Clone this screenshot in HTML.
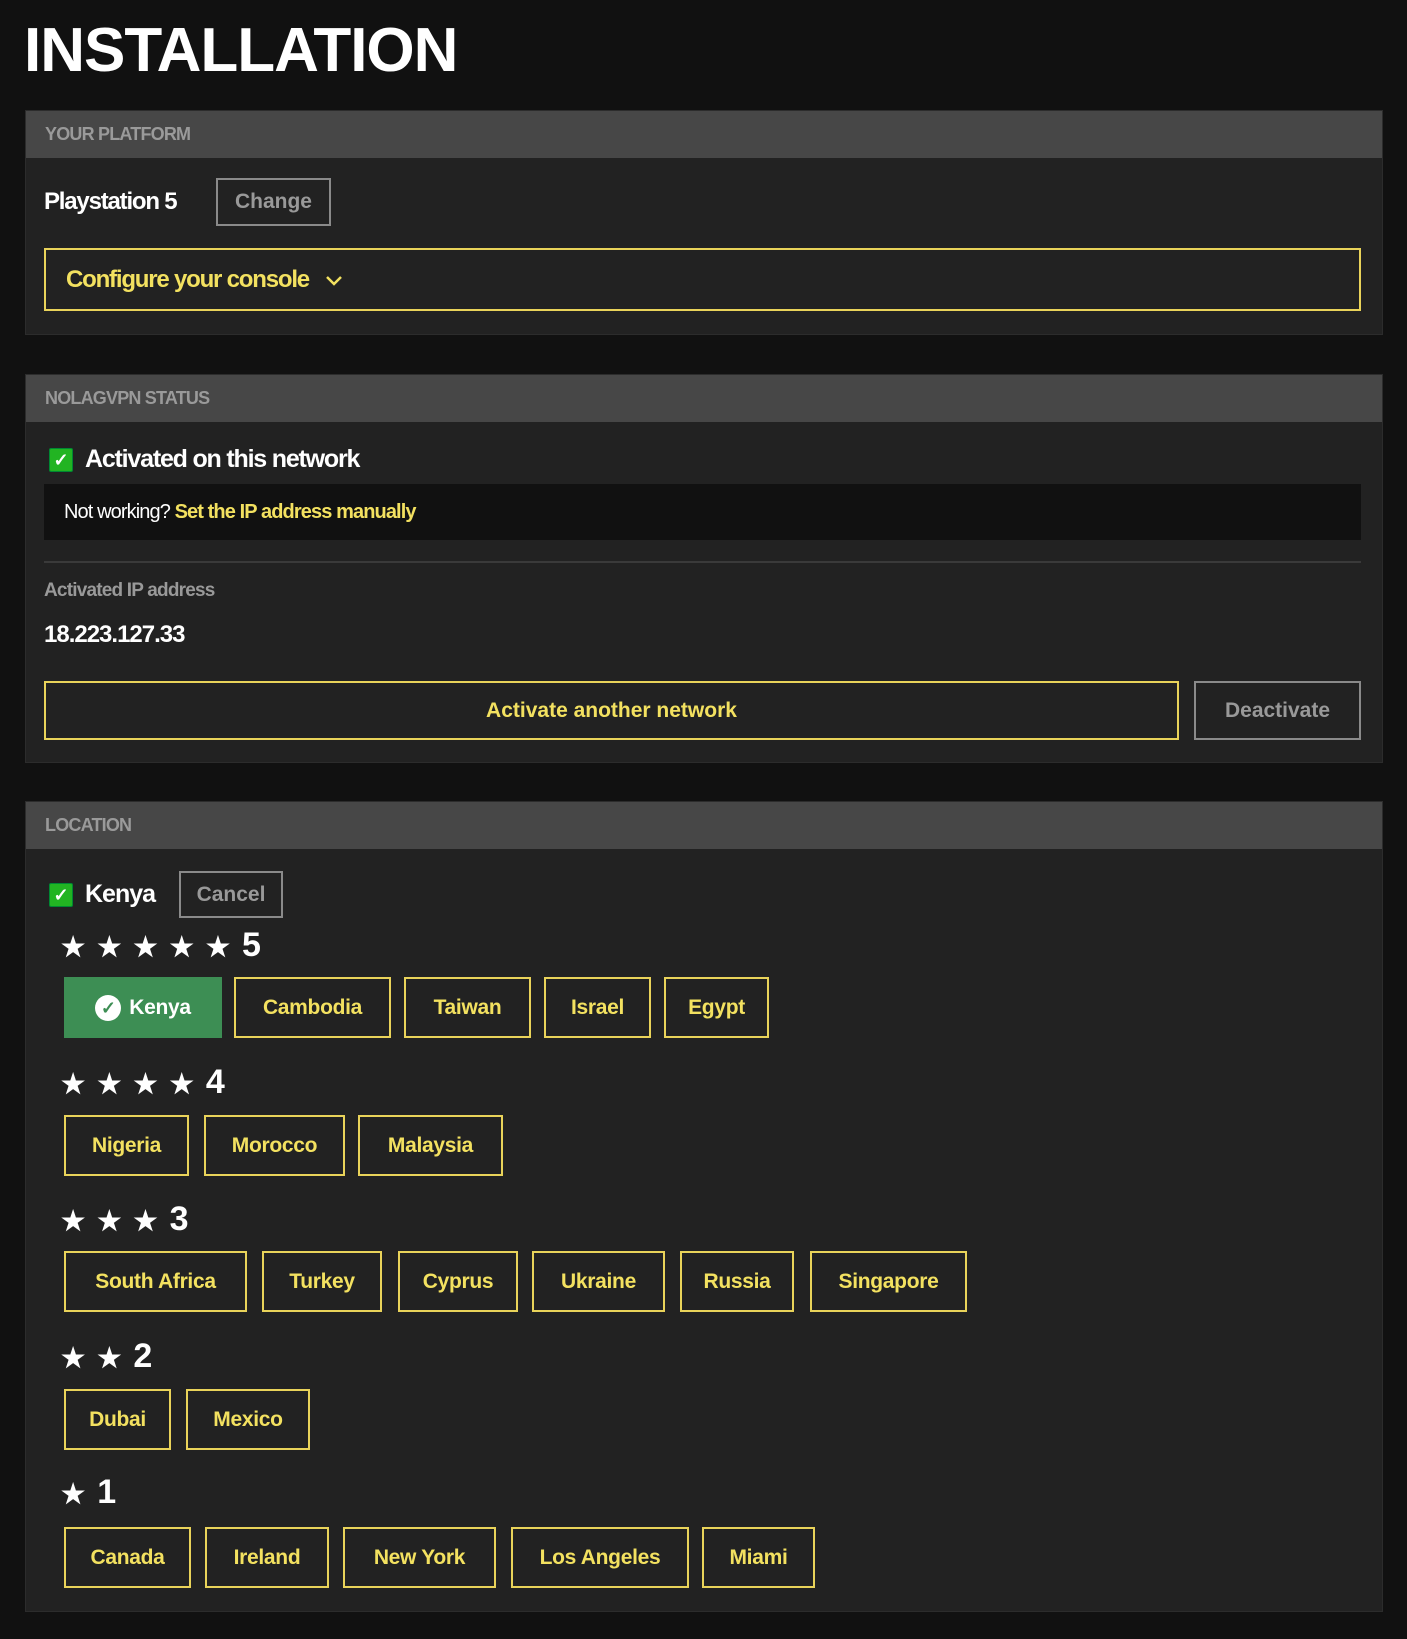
<!DOCTYPE html>
<html><head><meta charset="utf-8"><style>
*{box-sizing:border-box;margin:0;padding:0}
body{width:1407px;height:1639px;background:#111;font-family:"Liberation Sans",sans-serif;font-weight:bold;position:relative;overflow:hidden;color:#fff}
.a{position:absolute}
.panel{position:absolute;left:25px;width:1358px;background:#222;border:1px solid #2c2c2c}
.hd{position:absolute;left:0;top:0;right:0;height:47px;background:#474747;color:#9a9a9a;font-size:18px;letter-spacing:-0.8px;padding-left:19px;line-height:47px}
.y{color:#f3e160}
.box{position:absolute;display:flex;align-items:center;justify-content:center}
.chip{position:absolute;border:2px solid #e9d35a;color:#f3e160;font-size:21px;display:flex;align-items:center;justify-content:center;letter-spacing:-0.3px}
.stars{position:absolute;left:61px;font-size:27px;letter-spacing:12px;color:#fff}
.stars span{font-size:34px;letter-spacing:0}
.chk{position:absolute;width:24px;height:24px;background:#22b422;border:1px solid #083;color:#fff;font-size:18px;line-height:22px;text-align:center;border-radius:2px}
</style></head><body>
<div class="a" style="left:24px;top:18px;font-size:62px;letter-spacing:-1px;line-height:66px">INSTALLATION</div>

<div class="panel" style="top:110px;height:225px">
 <div class="hd">YOUR PLATFORM</div>
</div>
<div class="a" style="left:44px;top:188px;font-size:24px;letter-spacing:-1.2px">Playstation 5</div>
<div class="box" style="left:216px;top:178px;width:115px;height:48px;border:2px solid #8a8a8a;color:#999;font-size:21px">Change</div>
<div class="box y" style="left:44px;top:248px;width:1317px;height:63px;border:2px solid #e9d35a;justify-content:flex-start;padding-left:20px;font-size:24px;letter-spacing:-1.2px">Configure your console <svg width="18" height="12" viewBox="0 0 18 12" style="margin-left:16px"><path d="M2 3l7 7 7-7" fill="none" stroke="#f3e160" stroke-width="2.5"/></svg></div>

<div class="panel" style="top:374px;height:389px">
 <div class="hd">NOLAGVPN STATUS</div>
</div>
<div class="chk" style="left:49px;top:448px">&#10003;</div>
<div class="a" style="left:85px;top:445px;font-size:25px;letter-spacing:-1.2px">Activated on this network</div>
<div class="a" style="left:44px;top:484px;width:1317px;height:56px;background:#111;padding-left:20px;line-height:56px;font-size:20px;letter-spacing:-0.9px"><span style="font-weight:normal">Not working?</span> <span class="y">Set the IP address manually</span></div>
<div class="a" style="left:44px;top:561px;width:1317px;height:2px;background:#3a3a3a"></div>
<div class="a" style="left:44px;top:580px;font-size:19px;color:#999;letter-spacing:-0.8px">Activated IP address</div>
<div class="a" style="left:44px;top:621px;font-size:24px;letter-spacing:-1px">18.223.127.33</div>
<div class="box y" style="left:44px;top:681px;width:1135px;height:59px;border:2px solid #e9d35a;font-size:21px">Activate another network</div>
<div class="box" style="left:1194px;top:681px;width:167px;height:59px;border:2px solid #8a8a8a;color:#999;font-size:21px">Deactivate</div>

<div class="panel" style="top:801px;height:811px">
 <div class="hd">LOCATION</div>
</div>
<div class="chk" style="left:49px;top:883px">&#10003;</div>
<div class="a" style="left:85px;top:880px;font-size:25px;letter-spacing:-1px">Kenya</div>
<div class="box" style="left:179px;top:871px;width:104px;height:47px;border:2px solid #8a8a8a;color:#999;font-size:21px">Cancel</div>

<div class="stars" style="top:926px">★★★★★<span>5</span></div>
<div class="chip" style="left:64px;top:977px;width:158px;height:61px;background:#3d8e54;border-color:#3d8e54;color:#fff"><span style="display:inline-block;width:26px;height:26px;border-radius:50%;background:#fff;color:#3d8e54;font-size:18px;line-height:26px;text-align:center;margin-right:8px">✓</span>Kenya</div>
<div class="chip" style="left:234px;top:977px;width:157px;height:61px">Cambodia</div>
<div class="chip" style="left:404px;top:977px;width:127px;height:61px">Taiwan</div>
<div class="chip" style="left:544px;top:977px;width:107px;height:61px">Israel</div>
<div class="chip" style="left:664px;top:977px;width:105px;height:61px">Egypt</div>

<div class="stars" style="top:1063px">★★★★<span>4</span></div>
<div class="chip" style="left:64px;top:1115px;width:125px;height:61px">Nigeria</div>
<div class="chip" style="left:204px;top:1115px;width:141px;height:61px">Morocco</div>
<div class="chip" style="left:358px;top:1115px;width:145px;height:61px">Malaysia</div>

<div class="stars" style="top:1200px">★★★<span>3</span></div>
<div class="chip" style="left:64px;top:1251px;width:183px;height:61px">South Africa</div>
<div class="chip" style="left:262px;top:1251px;width:120px;height:61px">Turkey</div>
<div class="chip" style="left:398px;top:1251px;width:120px;height:61px">Cyprus</div>
<div class="chip" style="left:532px;top:1251px;width:133px;height:61px">Ukraine</div>
<div class="chip" style="left:680px;top:1251px;width:114px;height:61px">Russia</div>
<div class="chip" style="left:810px;top:1251px;width:157px;height:61px">Singapore</div>

<div class="stars" style="top:1337px">★★<span>2</span></div>
<div class="chip" style="left:64px;top:1389px;width:107px;height:61px">Dubai</div>
<div class="chip" style="left:186px;top:1389px;width:124px;height:61px">Mexico</div>

<div class="stars" style="top:1473px">★<span>1</span></div>
<div class="chip" style="left:64px;top:1527px;width:127px;height:61px">Canada</div>
<div class="chip" style="left:205px;top:1527px;width:124px;height:61px">Ireland</div>
<div class="chip" style="left:343px;top:1527px;width:153px;height:61px">New York</div>
<div class="chip" style="left:511px;top:1527px;width:178px;height:61px">Los Angeles</div>
<div class="chip" style="left:702px;top:1527px;width:113px;height:61px">Miami</div>
</body></html>
